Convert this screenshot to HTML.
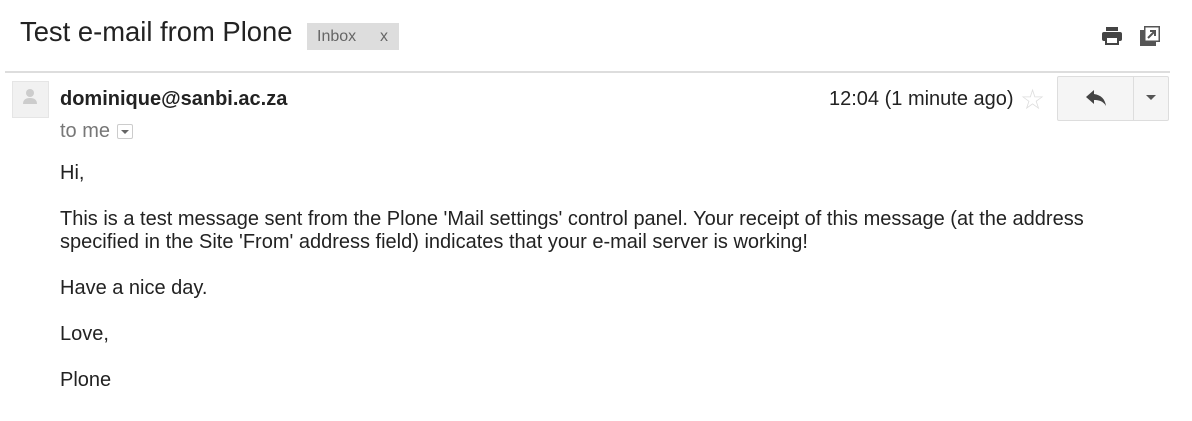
<!DOCTYPE html>
<html><head><style>
body{margin:0;width:1192px;height:421px;background:#fff;font-family:"Liberation Sans",Arial,sans-serif;color:#222;position:relative;overflow:hidden}
.a{position:absolute;white-space:nowrap}
</style></head><body>
<div class="a" style="left:20px;top:16px;font-size:27.4px;color:#222">Test e-mail from Plone</div>
<div class="a" style="left:307px;top:23px;width:92px;height:27px;background:#ddd;color:#666;font-size:16px;line-height:27px"><span style="margin-left:10px">Inbox</span><span style="position:absolute;left:73px">x</span></div>
<svg class="a" style="left:1101px;top:26px" width="22" height="20" viewBox="0 0 22 20"><rect x="5" y="1" width="12" height="4" fill="#444"/><rect x="1" y="6" width="20" height="9" rx="2" fill="#444"/><rect x="5" y="11" width="12" height="7" fill="#fff" stroke="#444" stroke-width="2"/></svg>
<svg class="a" style="left:1140px;top:26px" width="20" height="20" viewBox="0 0 20 20"><rect x="0" y="4" width="16" height="16" fill="#555"/><rect x="4" y="0" width="16" height="16" fill="#555"/><rect x="5.5" y="1.5" width="13" height="13" fill="#fff"/><path d="M8 12 L15 5 M10 5 H15 V10" stroke="#555" stroke-width="2" fill="none"/></svg>
<div class="a" style="left:5px;top:71px;width:1165px;height:2px;background:#ddd"></div>
<div class="a" style="left:12px;top:81px;width:37px;height:37px;background:#f1f1f1;border:1px solid #e5e5e5;box-sizing:border-box"></div>
<svg class="a" style="left:22px;top:88px" width="16" height="18" viewBox="0 0 16 18"><circle cx="8" cy="5" r="4" fill="#ccc"/><path d="M1 16 Q1 10 8 10 Q15 10 15 16Z" fill="#ccc"/></svg>
<div class="a" style="left:60px;top:88px;font-size:20px;font-weight:bold;color:#222">dominique@sanbi.ac.za</div>
<div class="a" style="left:60px;top:120px;font-size:20px;color:#777">to me</div>
<div class="a" style="left:117px;top:124px;width:16px;height:15px;border:1px solid #ccc;box-sizing:border-box;border-radius:2px"></div>
<div class="a" style="left:121px;top:130px;width:0;height:0;border-left:4px solid transparent;border-right:4px solid transparent;border-top:4px solid #666"></div>
<div class="a" style="left:829px;top:88px;font-size:20px;color:#222">12:04 (1 minute ago)</div>
<div class="a" style="left:1020px;top:83px;font-size:28px;color:#ddd">☆</div>
<div class="a" style="left:1057px;top:76px;width:112px;height:45px;border:1px solid #ddd;border-radius:2px;background:#f5f5f5;box-sizing:border-box"></div>
<div class="a" style="left:1133px;top:77px;width:1px;height:43px;background:#ddd"></div>
<svg class="a" style="left:1085px;top:89px" width="22" height="18" viewBox="0 0 22 18"><path d="M9 1 L1 8 L9 15 V11 C14 11 18 12 21 17 C20 10 16 6 9 5Z" fill="#444"/></svg>
<div class="a" style="left:1146px;top:95px;width:0;height:0;border-left:5px solid transparent;border-right:5px solid transparent;border-top:5px solid #555"></div>
<div class="a" style="left:60px;top:162px;font-size:20px;line-height:23px;color:#222;white-space:normal;width:1120px">Hi,<br><br>This is a test message sent from the Plone 'Mail settings' control panel. Your receipt of this message (at the address<br>specified in the Site 'From' address field) indicates that your e-mail server is working!<br><br>Have a nice day.<br><br>Love,<br><br>Plone</div>
</body></html>
